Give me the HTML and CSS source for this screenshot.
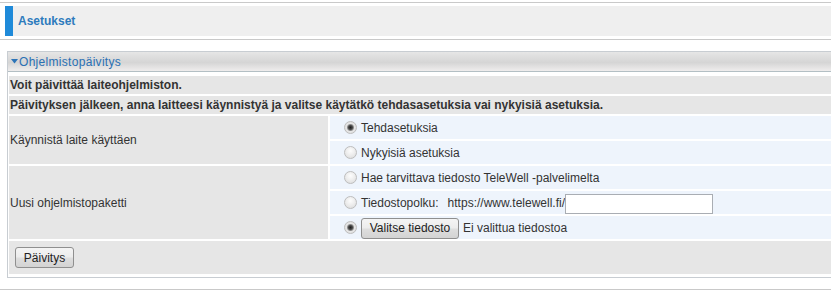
FILE: index.html
```html
<!DOCTYPE html>
<html lang="fi">
<head>
<meta charset="utf-8">
<title>Asetukset</title>
<link rel="stylesheet" href="styles.css">
</head>
<body>
<div class="rule rule-top"></div>
<div class="titlebar"><span class="titlebar-mark"></span><span class="titlebar-text">Asetukset</span></div>
<div class="rule rule-mid"></div>
<div class="panel">
  <div class="panel-head"><svg class="caret" width="7" height="5" viewBox="0 0 7 5"><path d="M0 0H7L3.5 4.5Z" fill="#2c74b8"/></svg>Ohjelmistopäivitys</div>
  <div class="panel-body">
    <div class="row-full">Voit päivittää laiteohjelmiston.</div>
    <div class="row-full">Päivityksen jälkeen, anna laitteesi käynnistyä ja valitse käytätkö tehdasasetuksia vai nykyisiä asetuksia.</div>
    <div class="form-grid">
      <div class="label label-boot">Käynnistä laite käyttäen</div>
      <label class="opt"><input type="radio" name="boot" class="radio" checked>Tehdasetuksia</label>
      <label class="opt"><input type="radio" name="boot" class="radio">Nykyisiä asetuksia</label>
      <div class="label label-pkg">Uusi ohjelmistopaketti</div>
      <label class="opt"><input type="radio" name="pkg" class="radio">Hae tarvittava tiedosto TeleWell -palvelimelta</label>
      <label class="opt"><input type="radio" name="pkg" class="radio"><span class="path-label">Tiedostopolku:</span><span class="url">https://www.telewell.fi/</span><input type="text" class="path-input"></label>
      <div class="opt"><input type="radio" name="pkg" class="radio" checked><button type="button" class="btn btn-file">Valitse tiedosto</button><span class="file-note">Ei valittua tiedostoa</span></div>
    </div>
    <div class="row-actions"><button type="button" class="btn btn-submit">Päivitys</button></div>
  </div>
</div>
<div class="rule rule-bottom"></div>
</body>
</html>
```

FILE: styles.css
```css
html, body {
  margin: 0;
  padding: 0;
  background: #ffffff;
  overflow: hidden;
}

body {
  font-family: "Liberation Sans", Arial, sans-serif;
  font-size: 12px;
  color: #333333;
}

.rule {
  height: 1px;
  background: #c9c9c9;
}

.rule-top {
  margin-top: 2px;
}

.titlebar {
  margin: 3px 0 0 5px;
  height: 30px;
  background: #efefef;
  display: flex;
  align-items: center;
}

.titlebar-mark {
  align-self: stretch;
  width: 8px;
  background: #1f8ad9;
  margin-right: 5px;
}

.titlebar-text {
  font-weight: bold;
  color: #2d7bbd;
  font-size: 12px;
  padding-bottom: 1px;
}

.rule-mid {
  margin-top: 3px;
}

.panel {
  margin: 11px -40px 0 7px;
  border: 1px solid #c8cdd2;
}

.panel-head {
  height: 19px;
  background: linear-gradient(#e6e6e6, #d5d5d5 55%, #efeded);
  border-bottom: 1px solid #b3bfc4;
  color: #2a70b4;
  font-size: 12px;
  letter-spacing: 0.3px;
  padding-left: 3px;
  display: flex;
  align-items: center;
}

.caret {
  margin-right: 1px;
  flex: none;
}

.panel-body {
  padding: 4px 1px 3px 1px;
  display: flex;
  flex-direction: column;
  gap: 2px;
}

.row-full {
  height: 18px;
  line-height: 18px;
  background: #e6e6e6;
  font-weight: bold;
  padding-left: 1px;
  white-space: nowrap;
}

.form-grid {
  display: grid;
  grid-template-columns: 319px 1fr;
  grid-auto-rows: 23px;
  gap: 2px;
}

.label {
  background: #e6e6e6;
  display: flex;
  align-items: center;
  padding-left: 1px;
}

.label-boot {
  grid-row: span 2;
}

.label-pkg {
  grid-row: span 3;
}

.opt {
  background: #eef4fc;
  display: flex;
  align-items: center;
  padding-left: 14px;
  white-space: nowrap;
}

.path-label {
  margin-right: 9px;
}

.radio {
  appearance: none;
  -webkit-appearance: none;
  width: 13px;
  height: 13px;
  margin: 0 4px 0 0;
  border-radius: 50%;
  border: 1px solid #bdbdbd;
  background: radial-gradient(circle at 50% 35%, #fdfdfd 0, #eeeeee 45%, #d9d9d9 100%);
  box-sizing: border-box;
  flex: none;
}

.radio:checked {
  background: radial-gradient(circle at 50% 50%, #1e1e1e 0, #4a4a4a 2px, #8c8c8c 3px, #e6e6e6 4px, #dcdcdc 100%);
}

.path-input {
  width: 148px;
  height: 20px;
  box-sizing: border-box;
  margin: 3px 0 0 0;
  border: 1px solid #a9adb3;
  background: #ffffff;
  padding: 0 2px;
  font: inherit;
}

.btn {
  font-family: "Liberation Sans", Arial, sans-serif;
  font-size: 12px;
  color: #222222;
  border: 1px solid #8f8f8f;
  border-radius: 3px;
  background: linear-gradient(#f4f4f4, #ececec 48%, #dedede 52%, #d3d3d3);
  padding: 0 7px;
  box-sizing: border-box;
}

.btn-file {
  width: 98px;
  height: 21px;
  margin-top: 1px;
}

.file-note {
  margin-left: 4px;
}

.row-actions {
  height: 33px;
  background: #e6e6e6;
  padding: 6px 0 0 6px;
  box-sizing: border-box;
}

.btn-submit {
  width: 59px;
  height: 21px;
  display: block;
}

.rule-bottom {
  margin-top: 11px;
}
```
